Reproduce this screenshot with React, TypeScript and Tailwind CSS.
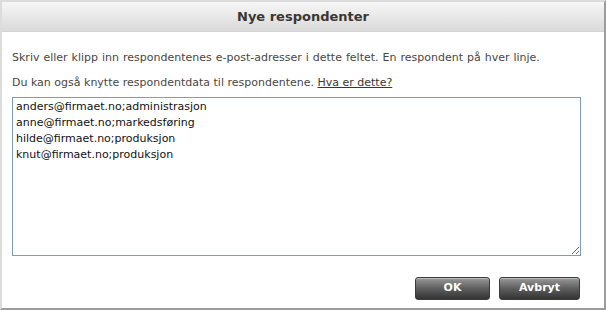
import { useState } from "react";

const initial = [
  "anders@firmaet.no;administrasjon",
  "anne@firmaet.no;markedsføring",
  "hilde@firmaet.no;produksjon",
  "knut@firmaet.no;produksjon",
].join("\n");

function DialogButton({ label }: { label: string }) {
  return (
    <button className="h-[23px] rounded-[3px] border border-[#3c3c3c] bg-gradient-to-b from-[#9a9a9a] via-[#5e5e5e] to-[#343434] text-[11px] font-bold text-white shadow-[inset_0_1px_0_rgba(255,255,255,0.35)]">
      {label}
    </button>
  );
}

export default function App() {
  const [value, setValue] = useState(initial);

  return (
    <div className="h-[310px] w-[606px] font-['DejaVu_Sans',Verdana,sans-serif]">
      <div className="flex h-full flex-col border-t-2 border-l-2 border-r-2 border-b-2 border-t-[#dcdcdc] border-l-[#dcdcdc] border-r-[#9c9c9c] border-b-[#9c9c9c] bg-white">
        <div className="flex h-[30px] items-center justify-center border-b border-[#d4d4d4] bg-gradient-to-b from-[#f6f6f6] to-[#dadada]">
          <h2 className="text-[13px] font-bold text-[#3b3631]">Nye respondenter</h2>
        </div>

        <div className="flex flex-1 flex-col px-[10px] text-[11px] text-[#4a4643]">
          <p className="mt-[19px] leading-[13px] [word-spacing:0.5px]">
            Skriv eller klipp inn respondentenes e-post-adresser i dette feltet. En respondent på hver linje.
          </p>
          <p className="mt-[12px] leading-[13px]">
            Du kan også knytte respondentdata til respondentene.{" "}
            <a href="#" className="text-[#3b3631] underline">
              Hva er dette?
            </a>
          </p>

          <textarea
            value={value}
            onChange={(e) => setValue(e.target.value)}
            className="mt-[8px] h-[159px] w-[569px] resize-y border border-[#7f9db9] px-[3px] py-[1px] text-[11px] leading-[16px] text-[#111] outline-none"
          />

          <div className="mt-[21px] flex justify-end gap-[9px] pr-[14px]">
            <div className="flex w-[75px] flex-col">
              <DialogButton label="OK" />
            </div>
            <div className="flex w-[81px] flex-col">
              <DialogButton label="Avbryt" />
            </div>
          </div>
        </div>
      </div>
    </div>
  );
}
